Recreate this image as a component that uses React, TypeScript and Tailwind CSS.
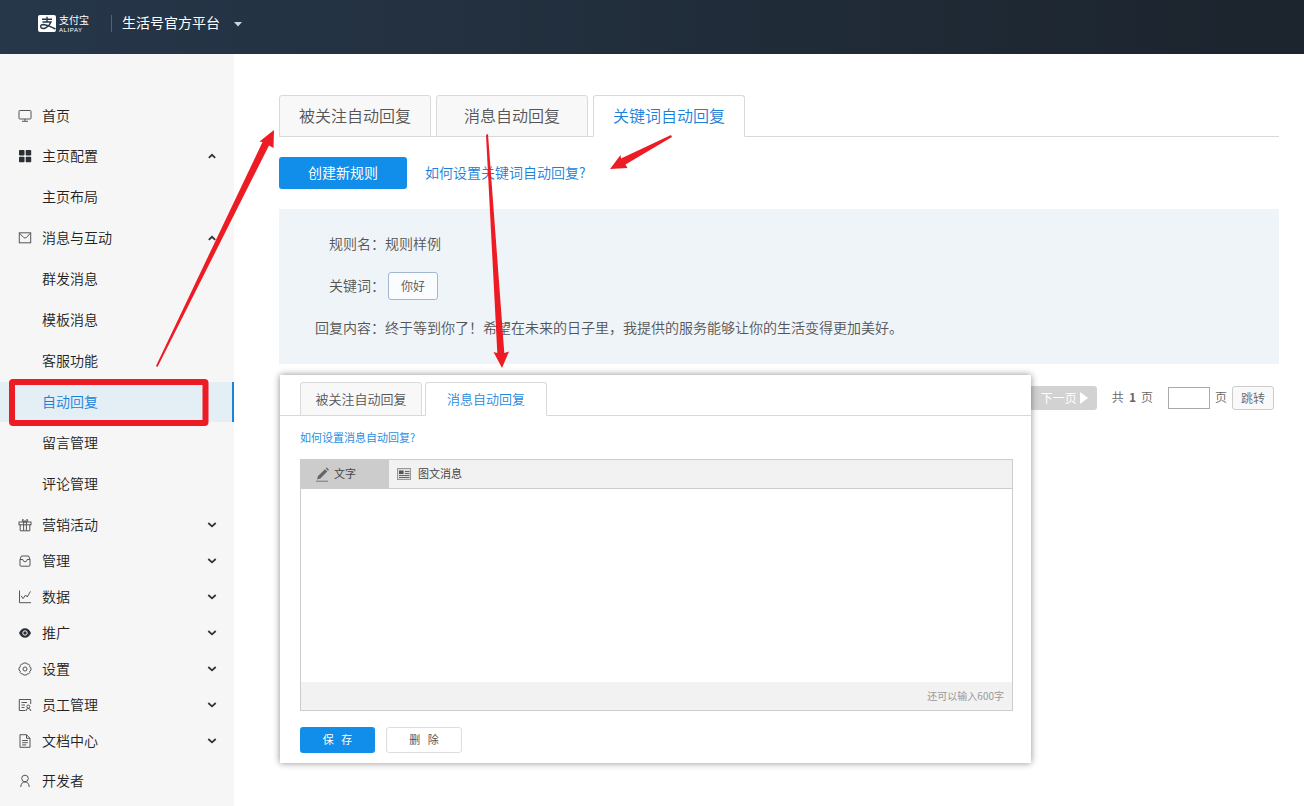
import type { ReactNode } from 'react'

type NavItem = {
  label: string
  icon?: ReactNode
  arrow?: 'up' | 'down'
  active?: boolean
}

function Icon({ children }: { children: ReactNode }) {
  return (
    <svg viewBox="0 0 14 14" className="w-3.5 h-3.5" fill="none" stroke="#555" strokeWidth="1" aria-hidden="true">
      {children}
    </svg>
  )
}

const icons = {
  home: (
    <Icon>
      <rect x="1" y="1.5" width="12" height="8.5" rx="0.8" />
      <path d="M7 10v2M4 12.3h6" />
    </Icon>
  ),
  blocks: (
    <Icon>
      <g fill="#2b2f36" stroke="none">
        <rect x="1" y="1" width="5.5" height="5.5" rx="0.8" />
        <rect x="7.7" y="1" width="5.5" height="5.5" rx="0.8" />
        <rect x="1" y="7.7" width="5.5" height="5.5" rx="0.8" />
        <rect x="7.7" y="7.7" width="5.5" height="5.5" rx="0.8" />
      </g>
    </Icon>
  ),
  mail: (
    <Icon>
      <rect x="1.3" y="1.8" width="11.4" height="10" />
      <path d="M1.600 2.200L5.600 6.500Q7 7.600 8.400 6.500L12.400 2.200" />
    </Icon>
  ),
  gift: (
    <Icon>
      <rect x="1" y="4" width="12" height="2.8" />
      <path d="M2.2 6.8v6h9.6v-6M5.6 4v8.8M8.4 4v8.8M7 4L4.2 3.2L4.8 1.2L7 3.6L9.2 1.2L9.8 3.2L7 4" />
    </Icon>
  ),
  box: (
    <Icon>
      <path d="M2 5.5L3.4 2h7.2L12 5.5v5.7a1 1 0 0 1-1 1H3a1 1 0 0 1-1-1zM2 5.5h2.8Q5.2 7.8 7 7.8T9.2 5.5H12" />
    </Icon>
  ),
  chart: (
    <Icon>
      <path d="M1.5 0.5v12.2H13M3.2 5.8L5 8.6L7.6 5L9.2 7L12.5 1.4" />
    </Icon>
  ),
  eye: (
    <Icon>
      <path d="M1 7Q3 2.3 7 2.3T13 7Q11 11.7 7 11.7T1 7z" fill="#2b2f36" stroke="none" />
      <circle cx="7" cy="7" r="2.2" stroke="#f6f6f6" />
    </Icon>
  ),
  gear: (
    <Icon>
      <path d="M5.6 1h2.8l.8 1.1 1.5.1 1 1.3-.1 1.3 1.4 1v2.4l-1.3 1 .1 1.4-1.1 1.2-1.5.1-.8 1.1H5.6l-.8-1.1-1.5-.1-1.1-1.2.1-1.4L1 8.2V5.8l1.4-1-.1-1.3 1-1.3 1.5-.1z" />
      <circle cx="7" cy="7" r="2" />
    </Icon>
  ),
  staff: (
    <Icon>
      <path d="M12.7 6V1.5H1.3v11h6M3.5 4.5H9M3.5 7H7M3.5 9.5h3" />
      <circle cx="10.3" cy="8.5" r="1.5" />
      <path d="M7.9 13Q8 10.5 10.3 10.5T12.9 13" />
    </Icon>
  ),
  doc: (
    <Icon>
      <path d="M8.5 0.7H2v12.6h10V4.3zM8.5 0.7v3.6H12M4.2 6.5h5.6M4.2 8.7h5.6M4.2 10.9h4" />
    </Icon>
  ),
  user: (
    <Icon>
      <circle cx="7" cy="4.5" r="3.3" />
      <path d="M2.8 13Q3 8 7 8T11.2 13" />
    </Icon>
  ),
}

const openItems: NavItem[] = [
  { label: '主页布局' },
  { label: '消息与互动', icon: icons.mail, arrow: 'up' },
  { label: '群发消息' },
  { label: '模板消息' },
  { label: '客服功能' },
  { label: '自动回复', active: true },
  { label: '留言管理' },
  { label: '评论管理' },
]

const closedItems: NavItem[] = [
  { label: '营销活动', icon: icons.gift, arrow: 'down' },
  { label: '管理', icon: icons.box, arrow: 'down' },
  { label: '数据', icon: icons.chart, arrow: 'down' },
  { label: '推广', icon: icons.eye, arrow: 'down' },
  { label: '设置', icon: icons.gear, arrow: 'down' },
  { label: '员工管理', icon: icons.staff, arrow: 'down' },
  { label: '文档中心', icon: icons.doc, arrow: 'down' },
]

function NavLink({ item, className }: { item: NavItem; className: string }) {
  return (
    <a
      href="#"
      className={`flex items-center pl-[18px] pr-4 ${className} ${item.active ? 'bg-[#e3eef5] text-[#1a80d8] border-r-2 border-[#1a85d6]' : 'text-[#222]'}`}
    >
      <span className="w-6 shrink-0">{item.icon}</span>
      <span className="grow pb-0.5">{item.label}</span>
      {item.arrow && (
        <svg viewBox="0 0 12 12" className="w-3 h-3" fill="none" stroke="#333" strokeWidth="1.8" aria-hidden="true">
          <path d={item.arrow === 'up' ? 'M2.8 7.8L6 4.8L9.2 7.8' : 'M2.3 4L6 7.3L9.7 4'} />
        </svg>
      )}
    </a>
  )
}

function Logo() {
  return (
    <div className="flex items-center gap-[3px] font-normal text-white">
      <svg viewBox="0 0 18 17" className="w-[18px] h-[17px]" aria-hidden="true">
        <rect width="18" height="17" rx="2" fill="#fff" />
        <g fill="none" stroke="#26374a" strokeWidth="1.4">
          <path d="M4 4.2h10M9 1.8v5M4.5 7h8.5Q11.5 11 7.5 13Q3.5 14.3 2.7 12Q2.5 9.5 5.5 9.5Q9 9.8 17.5 14" />
        </g>
      </svg>
      <div className="flex flex-col">
        <span className="text-[10px] leading-[15px]">支付宝</span>
        <span className="font-['Liberation_Sans',sans-serif] text-[6px] leading-[7px] tracking-widest">ALIPAY</span>
      </div>
    </div>
  )
}

function ReplyDialog() {
  return (
    <section className="absolute left-[46px] top-[321px] w-[751px] bg-white pt-[7px] pb-2.5 shadow-[0_0_7px_rgba(0,0,0,0.45)]">
      <div className="flex gap-[3px] pl-5 border-b border-[#d9d9d9] text-[13px]">
        <button className="w-[122px] h-[34px] -mb-px rounded-t-[3px] border border-[#d9d9d9] bg-[#f8f8f8] text-[#555]">被关注自动回复</button>
        <button className="w-[122px] h-[34px] -mb-px rounded-t-[3px] border border-[#d9d9d9] border-b-white bg-white text-[#1f88e0]">消息自动回复</button>
      </div>
      <div className="pl-5 pr-[18px] text-[11px] font-normal">
        <a href="#" className="block pt-[11px] leading-5 text-[#2a8ee0]">如何设置消息自动回复?</a>
        <div className="mt-3 border border-[#ccc]">
          <div className="flex h-[29px] border-b border-[#ccc] bg-[#f2f2f2] text-[#444]">
            <button className="flex items-center w-[88px] pl-3.5 gap-1 bg-[#ccc]">
              <svg viewBox="0 0 15 15" className="w-[15px] h-[15px]" aria-hidden="true">
                <path d="M2 12.5L3 9L10 2.2L12.3 4.5L5.4 11.5zM10.7 1.5L11.7 0.6L14 2.8L13 3.8z" fill="#666" />
                <path d="M1 14.2h12" stroke="#777" />
              </svg>
              文字
            </button>
            <button className="flex items-center pl-2 gap-1.5">
              <svg viewBox="0 0 15 13" className="w-[15px] h-[13px]" fill="none" stroke="#999" aria-hidden="true">
                <rect x="0.5" y="0.5" width="13" height="11" fill="#ddd" />
                <rect x="2" y="2.5" width="4.500" height="3.500" fill="#555" stroke="none" />
                <path d="M8 3.5h4.500M8 5.5h4.500M2 7.5h10.500M2 9.500h10.500" stroke="#666" />
              </svg>
              图文消息
            </button>
          </div>
          <textarea aria-label="回复内容" className="block w-full h-[193px] resize-none outline-none" />
          <div className="h-7 pr-2 bg-[#f2f2f2] text-right text-[10px] leading-7 text-[#999]">还可以输入600字</div>
        </div>
        <div className="flex gap-[11px] mt-4">
          <button className="w-[75px] h-[26px] rounded-[3px] bg-[#108ee9] text-white">保&nbsp;&nbsp;&nbsp;存</button>
          <button className="w-[76px] h-[26px] rounded-[3px] border border-[#ddd] text-[#555]">删&nbsp;&nbsp;&nbsp;除</button>
        </div>
      </div>
    </section>
  )
}

// red box and arrows drawn on top of the page
function Annotations() {
  return (
    <svg viewBox="0 0 760 440" className="absolute left-0 top-0 w-[760px] h-[440px] pointer-events-none" fill="#ed1c24" aria-hidden="true">
      <rect x="12" y="382" width="193.5" height="41" rx="1" fill="none" stroke="#ed1c24" strokeWidth="6" />
      <path d="M156 366L262.5 142L259.5 141.5L274 130L273.5 148L269 145.5L157.5 367z" />
      <path d="M486 135L497.3 353L493.5 352L502 368L509 351.5L504.3 353L488 134z" />
      <path d="M671 135L621 158.5L620.5 155L610 169L627.5 168L625.5 164.5L672 137z" />
    </svg>
  )
}

export default function App() {
  return (
    <div className="relative min-h-screen flex flex-col bg-white overflow-hidden text-sm font-[350] font-['Noto_Sans_CJK_SC',sans-serif]">
      <header className="flex items-center h-[54px] pl-[38px] pb-2 bg-linear-to-r from-[#26374a] to-[#1c242d] text-white">
        <Logo />
        <div className="flex items-center h-[17px] ml-[22px] pl-2.5 border-l border-[#56616d]">
          <button className="flex items-center gap-3.5 pb-0.5 font-normal">
            生活号官方平台
            <svg viewBox="0 0 8 5" className="w-2 h-[5px] mt-1" fill="#ccd5dd" aria-hidden="true"><path d="M0 0h8L4 4.5z" /></svg>
          </button>
        </div>
      </header>

      <div className="flex grow">
        <nav className="w-[234px] shrink-0 pt-[42px] bg-[#f6f6f6]">
          <NavLink item={{ label: '首页', icon: icons.home }} className="h-10" />
          <NavLink item={{ label: '主页配置', icon: icons.blocks, arrow: 'up' }} className="h-10" />
          {openItems.map(item => <NavLink key={item.label} item={item} className="h-10 mt-px" />)}
          <div className="pt-[3px] pb-1">
            {closedItems.map(item => <NavLink key={item.label} item={item} className="h-9" />)}
          </div>
          <NavLink item={{ label: '开发者', icon: icons.user }} className="h-9" />
        </nav>

        <main className="relative grow pl-[45px] pr-[25px] pt-[41px]">
          <div className="flex gap-[5px] border-b border-[#d9d9d9] text-base">
            <button className="w-[152px] h-[42px] pb-0.5 -mb-px rounded-t-[3px] border border-[#d9d9d9] bg-[#f8f8f8] text-[#555]">被关注自动回复</button>
            <button className="w-[152px] h-[42px] pb-0.5 -mb-px rounded-t-[3px] border border-[#d9d9d9] bg-[#f8f8f8] text-[#555]">消息自动回复</button>
            <button className="w-[152px] h-[42px] pb-0.5 -mb-px rounded-t-[3px] border border-[#d9d9d9] border-b-white bg-white text-[#1a80d8]">关键词自动回复</button>
          </div>

          <div className="flex items-center gap-[18px] mt-5">
            <button className="w-32 h-8 pb-0.5 rounded-[3px] bg-[#108ee9] font-normal text-white">创建新规则</button>
            <a href="#" className="pb-[3px] text-[#1a80d8]">如何设置关键词自动回复?</a>
          </div>

          <dl className="grid grid-cols-[106px_1fr] auto-rows-[42px] items-center mt-5 pt-3.5 pb-[15px] bg-[#eff4f9] text-[#555]">
            <dt className="pb-0.5 text-right">规则名：</dt>
            <dd className="pb-0.5">规则样例</dd>
            <dt className="pb-0.5 text-right">关键词：</dt>
            <dd><span className="inline-block ml-[3px] w-[50px] h-7 rounded-[3px] border border-[#a3b6d0] bg-[#fafcff] text-center text-xs leading-[26px]">你好</span></dd>
            <dt className="pb-0.5 text-right">回复内容：</dt>
            <dd className="pb-0.5">终于等到你了！希望在未来的日子里，我提供的服务能够让你的生活变得更加美好。</dd>
          </dl>

          <div className="flex items-center justify-end mt-[22px] pr-[5px] text-xs text-[#666]">
            <button className="flex items-center gap-[3px] h-6 pl-3 pr-[9px] rounded-[3px] bg-[#d2d2d2] font-normal text-white">
              下一页
              <svg viewBox="0 0 8 12" className="w-2 h-3" fill="#fff" aria-hidden="true"><path d="M0 0l8 6l-8 6z" /></svg>
            </button>
            <span className="flex gap-[5px] ml-[15px] pb-0.5"><span>共</span><b className="font-bold">1</b><span>页</span></span>
            <input aria-label="页码" className="w-[42px] h-[22px] ml-[15px] mr-[5px] border border-[#aaa] bg-white" />
            <span className="pb-0.5">页</span>
            <button className="w-[42px] h-6 ml-[5px] rounded-[3px] border border-[#ccc] bg-[#f9f9f9]">跳转</button>
          </div>

          <ReplyDialog />
        </main>
      </div>

      <Annotations />
    </div>
  )
}
